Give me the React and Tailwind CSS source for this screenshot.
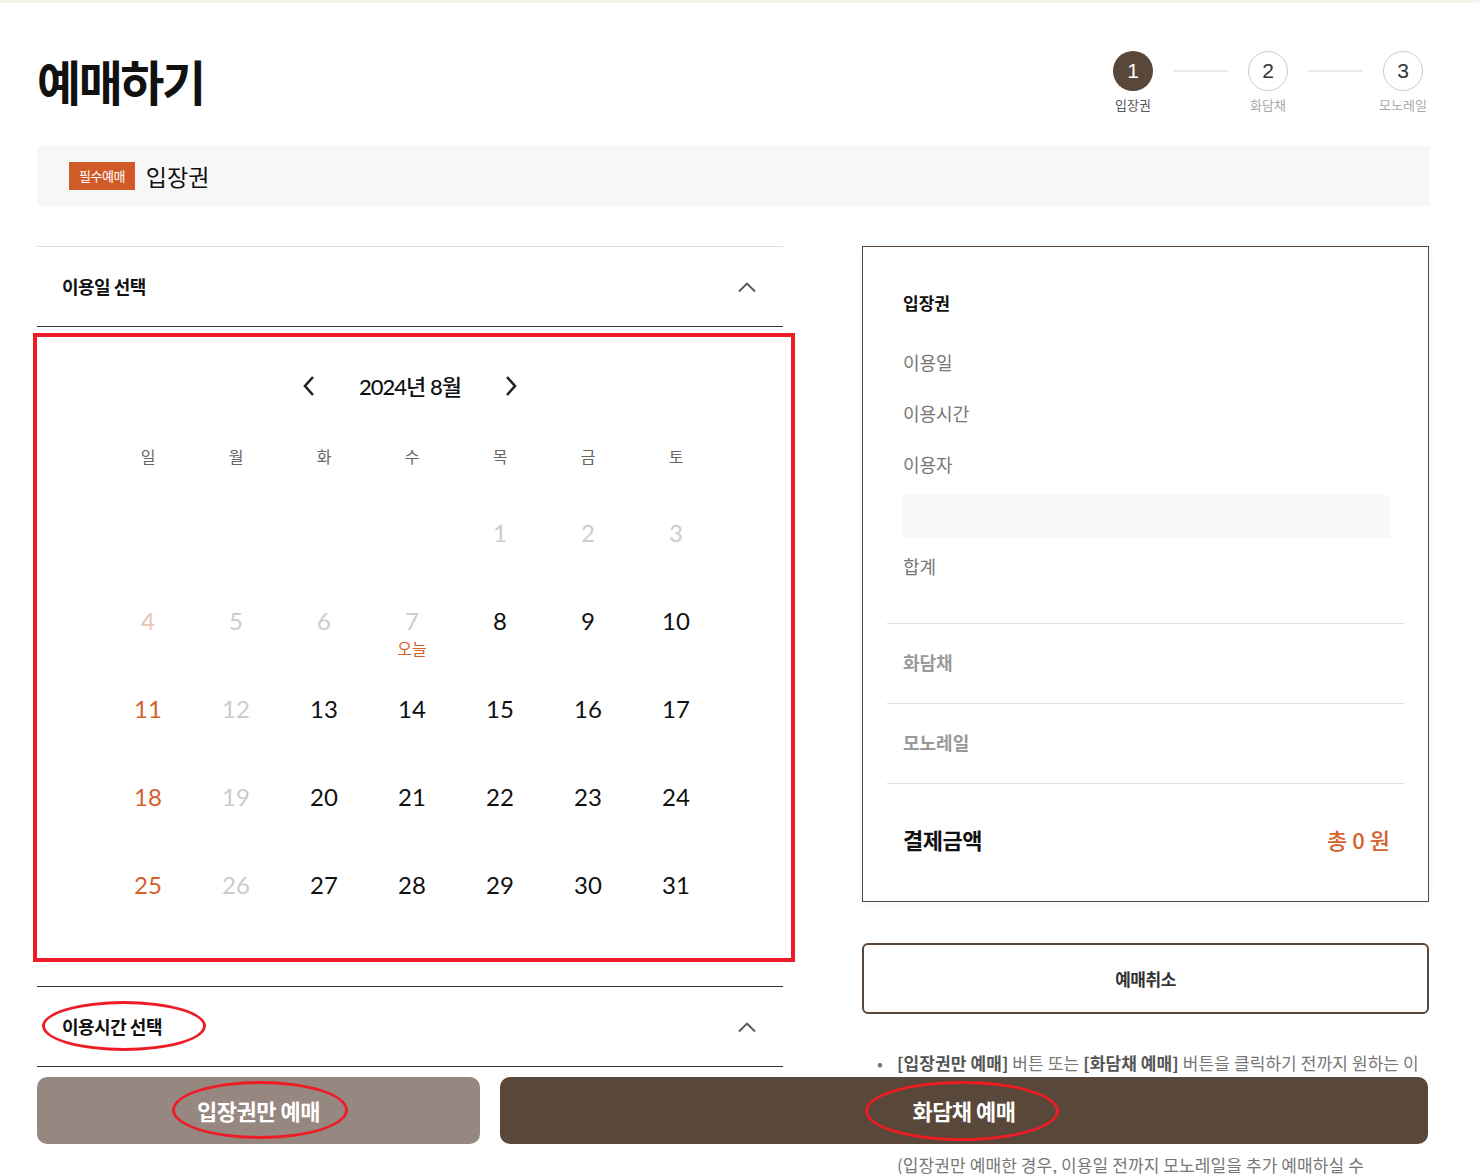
import React from "react";

const KR = { fontFamily: "'Noto Sans CJK KR', 'Noto Sans', sans-serif" };
const NUM = { fontFamily: "Lato, 'Noto Sans CJK KR', sans-serif" };

function ChevronUp() {
  return (
    <svg width="20" height="12" viewBox="0 0 20 12" fill="none">
      <path d="M2 10.5 L10 2.5 L18 10.5" stroke="#555" strokeWidth="1.8" />
    </svg>
  );
}

function Step({ n, label, active }) {
  return (
    <div className="flex flex-col items-center w-[56px]">
      <div
        className={
          "w-[40px] h-[40px] rounded-full flex items-center justify-center text-[21px] font-light " +
          (active ? "bg-[#59483a] text-white" : "border border-[#cccccc] text-[#333]")
        }
        style={{ fontFamily: "'Liberation Sans', sans-serif" }}
      >
        {n}
      </div>
      <div className={"mt-[5px] text-[13px] leading-[18px] whitespace-nowrap " + (active ? "text-[#555]" : "text-[#aaa]")}>
        {label}
      </div>
    </div>
  );
}

const weeks = [
  [null, null, null, null, 1, 2, 3],
  [4, 5, 6, 7, 8, 9, 10],
  [11, 12, 13, 14, 15, 16, 17],
  [18, 19, 20, 21, 22, 23, 24],
  [25, 26, 27, 28, 29, 30, 31],
];

function dayColor(d, col) {
  if (d <= 3) return "text-[#cccccc]";
  if (d === 4) return "text-[#ebc4b0]";
  if (d <= 7) return "text-[#cccccc]";
  if (col === 0) return "text-[#d5602c]";
  if (col === 1) return "text-[#cccccc]";
  return "text-[#111]";
}

export default function App() {
  return (
    <div className="min-h-[1400px] bg-white text-[#111]" style={KR}>
      <div className="h-[3px] bg-[#f7f3ea]" />
      <div className="px-[37px] w-[1466px]">
        {/* header */}
        <div className="flex justify-between items-start pt-[48px]">
          <h1 className="text-[48px] font-bold leading-[64px] tracking-[-2.5px] text-[#111] mt-[-3px]">예매하기</h1>
          <div className="flex items-start mr-[-2px]">
            <Step n="1" label="입장권" active />
            <div className="w-[55px] h-[2px] bg-[#e8e8e8] mt-[19px] mx-[12px]" />
            <Step n="2" label="화담채" />
            <div className="w-[55px] h-[2px] bg-[#e8e8e8] mt-[19px] mx-[12px]" />
            <Step n="3" label="모노레일" />
          </div>
        </div>

        {/* title bar */}
        <div className="mt-[32px] h-[60px] bg-[#f7f7f7] flex items-center pl-[32px] w-[1392px]">
          <span className="bg-[#d05a28] text-white text-[13px] px-[10px] h-[28px] leading-[28px] tracking-[-0.5px]">필수예매</span>
          <span className="ml-[11px] text-[23px] text-[#111]">입장권</span>
        </div>

        {/* main */}
        <div className="flex mt-[40px] w-[1392px]">
          {/* left column */}
          <div className="w-[746px] shrink-0">
            <div className="border-t border-[#dddddd] border-b border-b-[#333333] h-[81px] flex items-center justify-between pl-[25px] pr-[26px]">
              <span className="text-[18px] font-semibold tracking-[-0.5px] text-[#111]">이용일 선택</span>
              <ChevronUp />
            </div>

            <div className="relative pt-[44px] pb-[57px]">
              <div className="absolute left-[-4px] top-[6px] w-[762px] h-[629px] border-[4px] border-[#ee1c24] pointer-events-none" />
              <div className="flex items-center justify-center h-[30px]">
                <svg width="16" height="22" viewBox="0 0 16 22" fill="none" className="mr-[42px]">
                  <path d="M12 2 L4 11 L12 20" stroke="#222" strokeWidth="2.6" />
                </svg>
                <span className="text-[22px] font-medium tracking-[-1px] text-[#111]" style={NUM}>2024년 8월</span>
                <svg width="16" height="22" viewBox="0 0 16 22" fill="none" className="ml-[42px]">
                  <path d="M4 2 L12 11 L4 20" stroke="#222" strokeWidth="2.6" />
                </svg>
              </div>
              <div className="ml-[67px] w-[616px] mt-[33px]">
                <div className="grid grid-cols-7 h-[44px] mb-[11px] items-center text-center text-[16px] text-[#666]">
                  {["일", "월", "화", "수", "목", "금", "토"].map((w) => (
                    <div key={w}>{w}</div>
                  ))}
                </div>
                {weeks.map((wk, i) => (
                  <div key={i} className="grid grid-cols-7 h-[88px]">
                    {wk.map((d, j) => (
                      <div key={j} className="flex items-center justify-center">
                        {d && (
                          <div className={"relative text-[24px] leading-[30px] " + dayColor(d, j)} style={NUM}>
                            {d}
                            {d === 7 && (
                              <div className="absolute left-1/2 -translate-x-1/2 top-[27px] text-[16px] text-[#d5602c] whitespace-nowrap" style={KR}>
                                오늘
                              </div>
                            )}
                          </div>
                        )}
                      </div>
                    ))}
                  </div>
                ))}
              </div>
            </div>

            <div className="relative border-t border-[#333333] border-b h-[81px] flex items-center justify-between pl-[25px] pr-[26px]">
              <div className="absolute left-[5px] top-[14px] w-[164px] h-[50px] rounded-[50%] border-[3px] border-[#ee1c24]" />
              <span className="text-[18px] font-semibold tracking-[-0.5px] text-[#111]">이용시간 선택</span>
              <ChevronUp />
            </div>
          </div>

          {/* right column */}
          <div className="w-[567px] ml-[79px] shrink-0">
            <div className="border border-[#59483a] h-[656px] shadow-[0_0_8px_rgba(0,0,0,0.06)] px-[24px]">
              <div className="px-[16px] pt-[43px]">
                <div className="text-[17px] font-bold leading-[26px] text-[#111]">입장권</div>
                <div className="mt-[33px] text-[18px] leading-[26px] text-[#777]">이용일</div>
                <div className="mt-[25px] text-[18px] leading-[26px] text-[#777]">이용시간</div>
                <div className="mt-[25px] text-[18px] leading-[26px] text-[#777]">이용자</div>
                <div className="mt-[18px] h-[43px] bg-[#f8f8f8] mr-[-2px]" />
                <div className="mt-[15px] text-[18px] leading-[26px] text-[#777]">합계</div>
              </div>
              <div className="mt-[44px] border-t border-[#dddddd] h-[80px] flex items-center px-[16px] pb-[2px]">
                <span className="text-[18px] font-semibold text-[#999]">화담채</span>
              </div>
              <div className="border-t border-[#dddddd] h-[80px] flex items-center px-[16px] pb-[2px]">
                <span className="text-[18px] font-semibold text-[#999]">모노레일</span>
              </div>
              <div className="border-t border-[#dddddd] h-[117px] flex items-center justify-between px-[16px] pb-[6px]">
                <span className="text-[22px] font-bold tracking-[-0.5px] text-[#111]">결제금액</span>
                <span className="text-[22px] text-[#d5602c] font-medium mr-[-2px]">총 0 원</span>
              </div>
            </div>

            <div className="mt-[41px] h-[71px] border-2 border-[#59483a] rounded-[6px] flex items-center justify-center text-[17px] font-bold text-[#333] tracking-[-0.5px]">
              예매취소
            </div>

            <div className="mt-[32px] relative pl-[35px] text-[17px] leading-[34px] text-[#777] tracking-[0.1px]">
              <span className="absolute left-[15px] top-0">•</span>
              <div className="whitespace-nowrap">
                <b className="text-[#555] font-bold">[입장권만 예매]</b> 버튼 또는 <b className="text-[#555] font-bold">[화담채 예매]</b> 버튼을 클릭하기 전까지 원하는 이
              </div>
              <div className="whitespace-nowrap">용일과 이용시간을 자유롭게 변경하실 수 있습니다.</div>
              <div className="whitespace-nowrap">입장권 예매 후에는 화담채를 별도로 예매하실 수 없습니다.</div>
              <div className="whitespace-nowrap">(입장권만 예매한 경우, 이용일 전까지 모노레일을 추가 예매하실 수</div>
              <div className="whitespace-nowrap">있습니다.)</div>
            </div>
          </div>
        </div>
      </div>

      {/* fixed bottom buttons */}
      <div className="fixed bottom-[30px] left-[37px] flex gap-[20px]">
        <div className="relative w-[443px] h-[67px] rounded-[10px] bg-[#968880] flex items-center justify-center text-white text-[22px] font-bold tracking-[-0.5px]">
          <div className="absolute left-[135px] top-[4px] w-[176px] h-[58px] rounded-[50%] border-[3px] border-[#ee1c24]" />
          입장권만 예매
        </div>
        <div className="relative w-[928px] h-[67px] rounded-[10px] bg-[#59483a] flex items-center justify-center text-white text-[22px] font-bold tracking-[-0.5px]">
          <div className="absolute left-[365px] top-[4px] w-[194px] h-[60px] rounded-[50%] border-[3px] border-[#ee1c24]" />
          화담채 예매
        </div>
      </div>
    </div>
  );
}
